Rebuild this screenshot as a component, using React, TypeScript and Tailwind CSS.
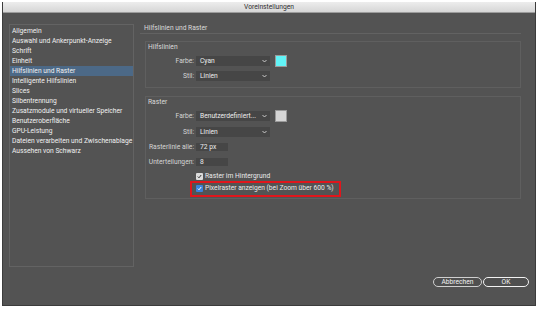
import React from "react";

const categories = [
  "Allgemein",
  "Auswahl und Ankerpunkt-Anzeige",
  "Schrift",
  "Einheit",
  "Hilfslinien und Raster",
  "Intelligente Hilfslinien",
  "Slices",
  "Silbentrennung",
  "Zusatzmodule und virtueller Speicher",
  "Benutzeroberfläche",
  "GPU-Leistung",
  "Dateien verarbeiten und Zwischenablage",
  "Aussehen von Schwarz",
];

const Chevron = () => (
  <svg width="5" height="4" viewBox="0 0 5 4" className="shrink-0">
    <path d="M0.5 1 L2.5 3 L4.5 1" fill="none" stroke="#d8d8d8" strokeWidth="0.9" />
  </svg>
);

const Select = ({ value }: { value: string }) => (
  <div className="flex h-full w-[74px] items-center justify-between bg-[#464646] pl-[4px] pr-[3px] text-[#ececec]">
    <span className="whitespace-nowrap leading-none">{value}</span>
    <Chevron />
  </div>
);

const Swatch = ({ color }: { color: string }) => (
  <div className={`ml-[5px] h-[12px] w-[12px] border border-[#9a9a9a] ${color}`} />
);

const Row = ({
  label,
  className = "",
  children,
}: {
  label?: string;
  className?: string;
  children: React.ReactNode;
}) => (
  <div className={`flex items-center ${className}`}>
    <div className="w-[50px] shrink-0 whitespace-nowrap pr-[2px] text-right leading-none text-[#d4d4d4]">
      {label}
    </div>
    {children}
  </div>
);

const Check = ({ blue }: { blue?: boolean }) => (
  <div
    className={`flex h-[7px] w-[7px] items-center justify-center rounded-[1px] ${
      blue ? "bg-[#3a82dc]" : "bg-[#dcdcdc]"
    }`}
  >
    <svg width="5" height="5" viewBox="0 0 5 5">
      <path
        d="M0.8 2.6 L2 3.8 L4.2 1"
        fill="none"
        stroke={blue ? "#ffffff" : "#333333"}
        strokeWidth="1"
      />
    </svg>
  </div>
);

export default function App() {
  return (
    <div
      className="h-[309px] w-[539px] overflow-hidden bg-white pl-[2px] pt-[2px] text-[6.7px]"
      style={{ fontFamily: "Roboto, Arial, sans-serif" }}
    >
      <div className="flex h-[304px] w-[534px] flex-col border-x border-b border-[#3c3c3c]">
        {/* title bar */}
        <div className="flex h-[11px] shrink-0 items-center justify-center border-b border-[#9c9c9c] bg-gradient-to-b from-[#ededed] to-[#d6d6d6] text-[#2e2e2e]">
          Voreinstellungen
        </div>

        <div className="flex flex-1 flex-col bg-[#535353]">
          <div className="flex pl-[6px] pt-[11px]">
            {/* category list */}
            <div className="h-[243px] w-[125px] border border-[#636363] pt-[1px]">
              {categories.map((c) => (
                <div
                  key={c}
                  className={`h-[10px] whitespace-nowrap pl-[2px] leading-[10px] text-[#f0f0f0] ${
                    c === "Hilfslinien und Raster" ? "bg-[#4c6987]" : ""
                  }`}
                >
                  {c}
                </div>
              ))}
            </div>

            {/* settings */}
            <div className="ml-[6px] w-[381px]">
              <div className="h-[10px] border-b border-[#626262] pl-[4px] leading-[9px] text-[#dadada]">
                Hilfslinien und Raster
              </div>

              <div className="ml-[5px] mt-[7px] flex flex-col border border-[#5f5f5f] pb-[6px]">
                <div className="h-[10px] pl-[2px] leading-[10px] text-[#dadada]">Hilfslinien</div>
                <Row label="Farbe:" className="mt-[3px] h-[12px]">
                  <div className="h-[10px]">
                    <Select value="Cyan" />
                  </div>
                  <Swatch color="bg-[#62f4f7]" />
                </Row>
                <Row label="Stil:" className="mt-[4px] h-[10px]">
                  <Select value="Linien" />
                </Row>
              </div>

              <div className="ml-[5px] mt-[8px] flex flex-col border border-[#5f5f5f] pb-[6px]">
                <div className="h-[10px] pl-[2px] leading-[10px] text-[#dadada]">Raster</div>
                <Row label="Farbe:" className="mt-[3px] h-[12px]">
                  <div className="h-[10px]">
                    <Select value="Benutzerdefiniert..." />
                  </div>
                  <Swatch color="bg-[#d6d6d6]" />
                </Row>
                <Row label="Stil:" className="mt-[5px] h-[10px]">
                  <Select value="Linien" />
                </Row>
                <Row label="Rasterlinie alle:" className="mt-[6px] h-[8px]">
                  <div className="flex h-full w-[32px] items-center bg-[#464646] pl-[4px] leading-none text-[#ececec]">
                    72 px
                  </div>
                </Row>
                <Row label="Unterteilungen:" className="mt-[7px] h-[8px]">
                  <div className="flex h-full w-[32px] items-center bg-[#464646] pl-[4px] leading-none text-[#ececec]">
                    8
                  </div>
                </Row>
                <Row className="mt-[6px] h-[8px]">
                  <Check />
                  <span className="ml-[2px] whitespace-nowrap leading-none text-[#eaeaea]">
                    Raster im Hintergrund
                  </span>
                </Row>
                <Row className="relative mt-[4px] h-[8px]">
                  <Check blue />
                  <span className="ml-[2px] whitespace-nowrap leading-none text-[#eaeaea]">
                    Pixelraster anzeigen (bei Zoom über 600 %)
                  </span>
                  <div className="pointer-events-none absolute left-[44px] top-[-3px] h-[16px] w-[151px] border-2 border-[#e0161c]" />
                </Row>
              </div>
            </div>
          </div>

          {/* buttons */}
          <div className="mt-[10px] flex justify-end gap-[1px] pr-[6px]">
            <button className="h-[10px] w-[49px] rounded-full border border-[#cfcfcf] bg-[#4f4f4f] leading-none text-[#f0f0f0]">
              Abbrechen
            </button>
            <button className="h-[10px] w-[46px] rounded-full border-[1.5px] border-[#f2f2f2] bg-[#4f4f4f] leading-none text-[#f4f4f4]">
              OK
            </button>
          </div>
        </div>
      </div>
    </div>
  );
}
